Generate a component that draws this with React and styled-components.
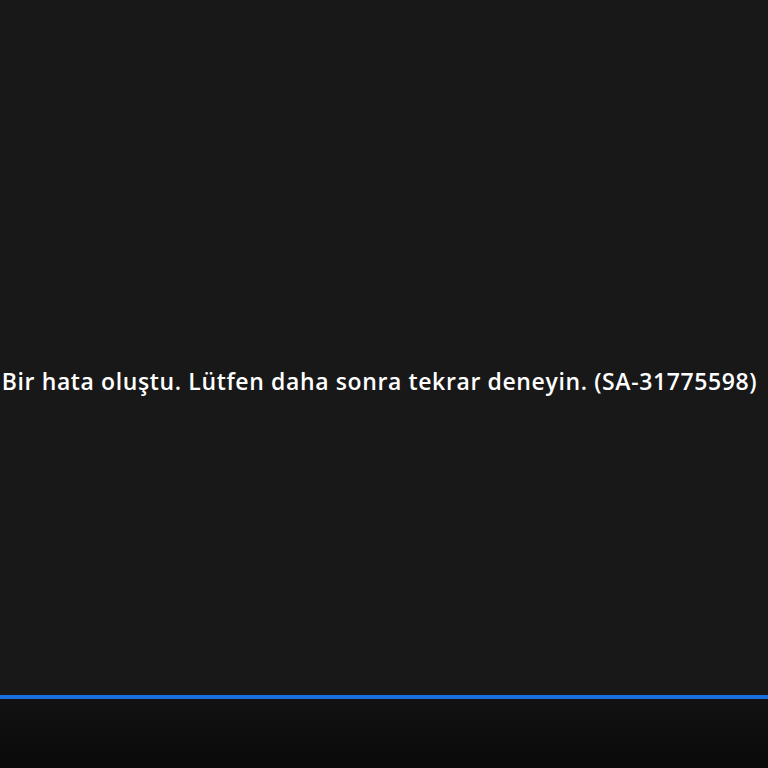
import React from "react";
import styled, { createGlobalStyle } from "styled-components";

const GlobalStyle = createGlobalStyle`
  html, body {
    margin: 0;
    padding: 0;
    background: #181818;
  }
  #root {
    height: 100vh;
  }
`;

const Page = styled.div`
  height: 768px;
  display: flex;
  flex-direction: column;
  overflow: hidden;
`;

const Player = styled.div`
  height: 695px;
  background: #181818;
  display: flex;
  flex-direction: column;
  align-items: center;
  padding: 364px 9px 0 0;
  box-sizing: border-box;
`;

const Message = styled.p`
  margin: 0;
  color: #ffffff;
  font-family: "Open Sans", "DejaVu Sans", sans-serif;
  font-weight: 600;
  font-size: 23px;
  line-height: 34px;
  white-space: nowrap;
  letter-spacing: 0.62px;
`;

const Progress = styled.div`
  height: 4px;
  background: #1a6ee0;
  box-shadow: 0 1px 0 #1d4c8c;
`;

const Controls = styled.div`
  flex: 1;
  background: linear-gradient(#121212, #0a0a0a);
`;

const App = () => {
  return (
    <>
      <GlobalStyle />
      <Page>
        <Player>
          <Message>
            Bir hata oluştu. Lütfen daha sonra tekrar deneyin. (SA-31775598)
          </Message>
        </Player>
        <Progress />
        <Controls />
      </Page>
    </>
  );
};

export default App;
